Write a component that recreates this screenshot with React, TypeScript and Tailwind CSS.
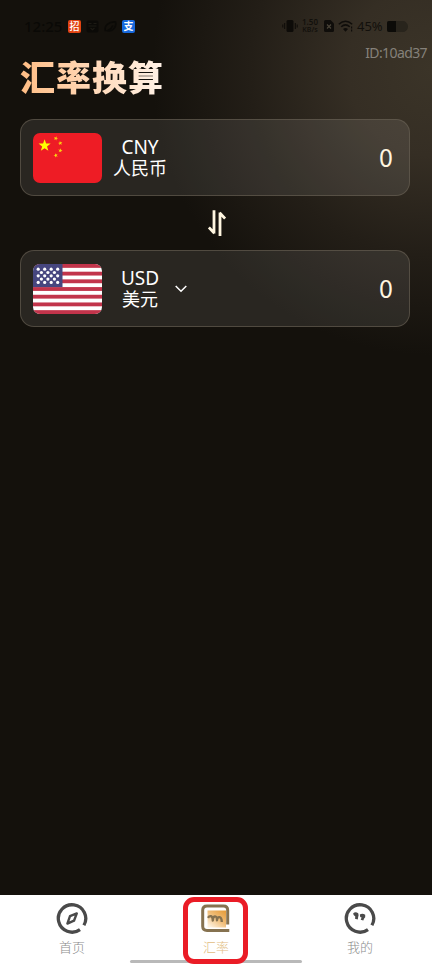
import type { ReactNode } from "react";

const STAR =
  "M0 -1 L0.235 -0.324 L0.951 -0.309 L0.38 0.124 L0.588 0.809 L0 0.4 L-0.588 0.809 L-0.38 0.124 L-0.951 -0.309 L-0.235 -0.324 Z";

function ChinaFlag() {
  const small = [
    [22.8, 5.3, 20],
    [27.3, 10.2, -10],
    [27.3, 17.5, 10],
    [22.8, 22.4, -20],
  ];
  return (
    <svg viewBox="0 0 69 50" className="w-[69px] h-[50px] rounded-[7px] shrink-0">
      <rect width="69" height="50" fill="#ee1c25" />
      <path d={STAR} fill="#ffff00" transform="translate(11.6 12.6) scale(6.4)" />
      {small.map(([x, y, r]) => (
        <path key={y} d={STAR} fill="#f8d510" transform={`translate(${x} ${y}) rotate(${r}) scale(2.3)`} />
      ))}
    </svg>
  );
}

function UsFlag() {
  const stripe = 50 / 13;
  return (
    <svg viewBox="0 0 69 50" className="w-[69px] h-[50px] rounded-[7px] shrink-0">
      <rect width="69" height="50" fill="#fff" />
      {[0, 2, 4, 6, 8, 10, 12].map((i) => (
        <rect key={i} y={i * stripe} width="69" height={stripe} fill="#c2344b" />
      ))}
      <rect width="29.5" height={stripe * 6} fill="#46467f" />
      {[0, 1, 2, 3, 4].map((row) =>
        (row % 2 ? [8.4, 14.9, 21.4] : [5.2, 11.7, 18.2, 24.7]).map((x) => (
          <circle key={`${row}-${x}`} cx={x} cy={5.2 + row * 3.3} r="1.6" fill="#fff" />
        )),
      )}
    </svg>
  );
}

function StatusBar() {
  return (
    <div className="h-[44px] pt-[8px] pl-[24px] pr-[24px] flex items-center justify-between text-[#0a0906]">
      <div className="flex items-center">
        <span className="w-[44px] text-[15px] leading-none font-medium">12:25</span>
        <span className="w-[13px] h-[13px] rounded-[2px] bg-[#e24412] flex items-center justify-center text-white text-[10px] leading-none font-medium">
          招
        </span>
        <svg viewBox="0 0 13 13" className="w-[13px] h-[13px] ml-[5px]">
          <rect x="0.5" y="0.5" width="12" height="12" rx="2" fill="#0b0a07" />
          <path d="M2.5 3.5h3M7.5 3.5h3M2.5 6h8M4.5 8l2 1.8 2-1.8" stroke="#1d1a14" strokeWidth="1.2" fill="none" />
        </svg>
        <svg viewBox="0 0 13 13" className="w-[13px] h-[13px] ml-[5px]">
          <path
            d="M1.5 11C-.5 6 5 1.5 11.5 2 13 7 8 12 3.5 10.8 6 9.5 8 8 9 5.5"
            stroke="#0b0a07"
            strokeWidth="1.7"
            fill="none"
          />
        </svg>
        <span className="w-[13px] h-[13px] ml-[5px] rounded-[2px] bg-[#1668dc] flex items-center justify-center text-white text-[10px] leading-none font-bold">
          支
        </span>
      </div>

      <div className="flex items-center text-[#12100c]">
        <svg viewBox="0 0 16 14" className="w-[16px] h-[14px]">
          <rect x="4.5" y="1" width="7" height="12" rx="1.5" fill="#0d0b08" />
          <path d="M2.7 4v6M.8 5.5v3M13.3 4v6M15.2 5.5v3" stroke="#0d0b08" strokeWidth="1" />
        </svg>
        <div className="w-[20px] ml-[2px] flex flex-col items-center text-[8px] leading-[8px] font-semibold">
          <div>1.50</div>
          <div className="text-[7px]">KB/s</div>
        </div>
        <svg viewBox="0 0 10 12" className="w-[10px] h-[12px] ml-[4px]">
          <path d="M0 1.5Q0 0 1.5 0H6.5L10 3.5V10.5Q10 12 8.5 12H1.5Q0 12 0 10.5Z" fill="#0f0d0a" />
          <path d="M3 4.5l4 4M7 4.5l-4 4" stroke="#4a4438" strokeWidth="1.2" />
        </svg>
        <svg viewBox="0 0 16 12" className="w-[16px] h-[12px] ml-[4px]">
          <path d="M.8 4.2Q7.5-1.7 14.2 4.2M3.2 6.8Q7.5 3 11.8 6.8" stroke="#0f0d0a" strokeWidth="1.5" fill="none" />
          <path d="M5 9Q7.5 7 10 9L7.5 11.8Z" fill="#0f0d0a" />
          <path d="M13.6 6.5v2M13.6 9.5v2" stroke="#0f0d0a" strokeWidth="1.2" />
        </svg>
        <span className="w-[27px] ml-[3px] text-[13px] leading-none">45%</span>
        <svg viewBox="0 0 21 11" className="w-[21px] h-[11px] ml-[3px]">
          <path d="M2 0H17Q21 2 21 5.5T17 11H2Q0 11 0 9V2Q0 0 2 0Z" fill="#28241c" />
          <path d="M2 0H9V11H2Q0 11 0 9V2Q0 0 2 0Z" fill="#0c0b08" />
        </svg>
      </div>
    </div>
  );
}

type CurrencyCardProps = {
  flag: ReactNode;
  code: string;
  name: string;
  selectable?: boolean;
};

function CurrencyCard({ flag, code, name, selectable }: CurrencyCardProps) {
  return (
    <div className="h-[77px] rounded-[14px] border border-[#6b6355]/60 bg-white/[0.09] pl-[12px] pr-[16px] flex items-center">
      {flag}
      <div className="w-[60px] ml-[8px] text-center text-white">
        <div className="text-[19px] leading-[21px]">{code}</div>
        <div className="text-[18px] leading-[21px]">{name}</div>
      </div>
      {selectable && (
        <svg viewBox="0 0 12 8" className="w-[12px] h-[8px] ml-[5px]" fill="none">
          <path d="M.7 1L6 6.3 11.3 1" stroke="#fff" strokeWidth="1.5" />
        </svg>
      )}
      <span className="ml-auto -mt-[2px] font-['Noto_Sans_CJK_SC',sans-serif] text-[25px] leading-none text-[#fff6e0]">
        0
      </span>
    </div>
  );
}

function HomeIcon() {
  return (
    <svg viewBox="0 0 32 32" className="w-[32px] h-[32px]" fill="none" stroke="#4a4a4a">
      <path d="M27.9 23.3A13.7 13.7 0 1 0 24 27.6" strokeWidth="3.3" />
      <path d="M20.8 11.4L18 18.7 11.4 21.6 14 14.2Z" strokeWidth="2.4" strokeLinejoin="round" />
    </svg>
  );
}

function RateIcon() {
  return (
    <svg viewBox="0 0 32 32" className="w-[32px] h-[32px]" fill="none">
      <defs>
        <linearGradient id="rate-fill" x1="1" y1="0" x2="0.2" y2="1">
          <stop offset="0" stopColor="#e59a35" />
          <stop offset="0.5" stopColor="#f0bd78" />
          <stop offset="1" stopColor="#fdf0dc" />
        </linearGradient>
      </defs>
      <rect x="7.5" y="8.5" width="18.5" height="17" fill="url(#rate-fill)" />
      <path
        d="M29.3 28.4H7Q2.7 28.4 2.7 24.2V8.2Q2.7 4 7 4H23.5Q27.7 4 27.7 8.2V22.5"
        stroke="#867250"
        strokeWidth="3"
      />
      <path
        d="M8 15.8C9.5 13.4 13 13.2 12.8 18.5C13 13 17.3 13 17 18.2C17.2 13.8 21.6 13.8 21.8 20"
        stroke="#867250"
        strokeWidth="2.4"
        strokeLinejoin="round"
      />
    </svg>
  );
}

function MineIcon() {
  return (
    <svg viewBox="0 0 32 32" className="w-[32px] h-[32px]" fill="none" stroke="#4a4a4a">
      <path d="M27.9 23.3A13.7 13.7 0 1 0 24 27.6" strokeWidth="3.3" />
      <g fill="#4a4a4a" stroke="none">
        <path d="M9.2 11.2Q11.5 9.3 14.2 11.2L14.6 13.2Q14 15 13.8 17.6L11 16.8 11.3 14.5Q9.2 14 9.2 11.2Z" />
        <path d="M15.8 12.5Q18.5 10.8 21.2 12.8V15.2Q20 16.2 19.3 18.6L16.7 17.8 17.6 15.6Q15.6 15 15.8 12.5Z" />
      </g>
    </svg>
  );
}

const tabs = [
  { label: "首页", icon: <HomeIcon />, active: false },
  { label: "汇率", icon: <RateIcon />, active: true },
  { label: "我的", icon: <MineIcon />, active: false },
];

function TabBar() {
  return (
    <nav className="relative h-[69px] bg-white grid grid-cols-3">
      {tabs.map((tab) => (
        <div key={tab.label} className="pt-[7px] flex flex-col items-center">
          {tab.icon}
          <span
            className={
              tab.active
                ? "mt-[4px] text-[13px] leading-[18px] font-light text-[#e2bd83]"
                : "mt-[4px] text-[13px] leading-[18px] font-light text-[#8c8c8c]"
            }
          >
            {tab.label}
          </span>
        </div>
      ))}
      {/* gesture bar */}
      <div className="absolute left-[130px] bottom-[1px] w-[172px] h-[3px] rounded-full bg-[#b9b9b9]" />
      {/* highlight around the active tab */}
      <div className="absolute left-[183px] top-[2px] w-[65px] h-[67px] rounded-[11px] border-[5px] border-[#ea1c26]" />
    </nav>
  );
}

export default function App() {
  return (
    <div className="w-[432px] h-[964px] overflow-hidden flex flex-col bg-[#14110c] font-['Noto_Sans','Noto_Sans_CJK_SC',sans-serif]">
      <main className="flex-1 bg-[radial-gradient(ellipse_280px_285px_at_432px_70px,#3b3428_0%,#352e24_30%,#231e17_65%,#14110c_100%)]">
        <StatusBar />
        <div className="h-[10px] pr-[5px] text-right text-[14px] leading-[18px] tracking-[-0.6px] text-[#85817a]">
          ID:10ad37
        </div>
        <div className="h-[65px] pl-[20px]">
          <h1 className="w-fit text-[35px] leading-[48px] font-black tracking-[1px] bg-gradient-to-r from-[#ffbd84] to-[#fff2e8] bg-clip-text text-transparent">
            汇率换算
          </h1>
        </div>
        <div className="pl-[20px] pr-[22px]">
          <CurrencyCard flag={<ChinaFlag />} code="CNY" name="人民币" />
          <div className="h-[54px] flex items-center justify-center">
            <svg viewBox="0 0 18 26" className="w-[18px] h-[26px] ml-[3px]" fill="none" stroke="#fff6e0" strokeWidth="2.8">
              <path d="M6 .3V23.5M6.4 23.3L.9 17.5" />
              <path d="M12 26V2.5M11.6 2.7L17.1 8.5" />
            </svg>
          </div>
          <CurrencyCard flag={<UsFlag />} code="USD" name="美元" selectable />
        </div>
      </main>
      <TabBar />
    </div>
  );
}
